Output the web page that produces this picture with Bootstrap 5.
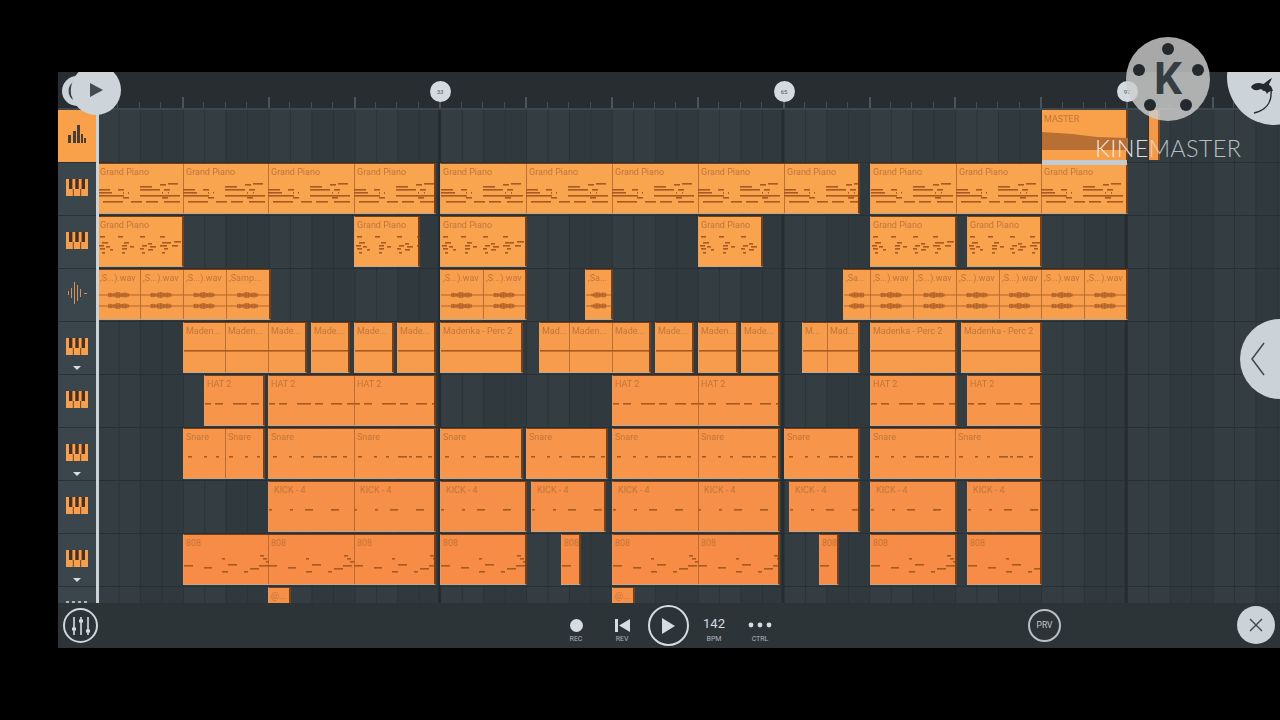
<!DOCTYPE html>
<html lang="en">
<head>
<meta charset="utf-8">
<title>FL Studio Mobile playlist</title>
<link href="https://cdn.jsdelivr.net/npm/bootstrap@5.3.0/dist/css/bootstrap.min.css" rel="stylesheet">
<style>
html,body{height:720px;width:1280px;overflow:hidden;background:#000;font-family:Roboto,"Liberation Sans",sans-serif;}
.stage{position:relative;width:1280px;height:720px;padding:72px 0 72px 58px;}
.app{width:1222px;height:576px;overflow:hidden;background:#30383d;}
.ruler{height:38px;flex:none;position:relative;z-index:5;background-color:#272d31;border-bottom:2px solid #3d474d;
 background-image:repeating-linear-gradient(90deg,#4a545a 0 2px,transparent 2px 85.85px),repeating-linear-gradient(90deg,#444e54 0 1px,transparent 1px 21.46px);
 background-size:100% 11px,100% 6px;background-position:38px 25px,38px 30px;background-repeat:no-repeat;}
.workarea{height:493px;flex:none;}
.heads{width:38px;flex:none;background:#3a454c;}
.head{height:53px;flex:none;position:relative;border-bottom:1px solid #2a3237;}
.head-on{background:#f9a04b;}
.head-cut{height:16px;border:0;}
.cutkeys{position:absolute;left:8px;bottom:0;width:22px;height:2px;background-image:repeating-linear-gradient(90deg,#aeb4b4 0 3px,transparent 3px 6px);}
.head svg{display:block;margin-top:-4px;}
.drop{position:absolute;left:15px;bottom:4px;width:0;height:0;border-left:4px solid transparent;border-right:4px solid transparent;border-top:4px solid #d7dde1;}
.canvas{width:1184px;flex:none;position:relative;overflow:hidden;background-color:#30393d;
 background-image:linear-gradient(90deg,#262d32 0 3px,transparent 3px),linear-gradient(90deg,#2a3237 0 1px,transparent 1px),linear-gradient(#283035 0 1px,transparent 1px),linear-gradient(90deg,rgba(255,255,255,.02) 0 43px,transparent 43px);
 background-size:343.4px 100%,21.46px 100%,100% 53px,85.85px 100%;background-position:342px 0,1px 0,0 52px,1px 0;filter:blur(.35px);}
.playline{position:absolute;left:0;top:0;bottom:0;width:2.5px;background:#c9d3da;z-index:4;}
.clip{position:absolute;overflow:hidden;background:var(--tone);border-top:1px solid #7d3f12;border-right:2px solid #7d3f12;border-bottom:1px solid #bda88f;border-left:1px solid rgba(195,170,145,.55);box-sizing:border-box;}
.clip svg{position:absolute;left:0;top:0;}
.seg{position:absolute;top:0;bottom:0;border-left:1px solid rgba(168,96,44,.75);}
.seg:first-child{border-left:0;}
.cliptxt{position:absolute;left:2px;top:3px;font-size:9px;line-height:11px;color:#c1753a;white-space:nowrap;}
.masterclip{position:absolute;left:946px;top:0;width:86px;height:50px;background:#f9a04b;border-right:2px solid #7d3f12;}
.masterclip .cliptxt{top:4px;}
.masterstrip{position:absolute;left:946px;top:50px;width:85px;height:5px;background:#c4cbd0;z-index:2;}
.thinclip{position:absolute;left:1053px;top:0;width:11px;height:50px;background:#f39a4a;border-right:2px solid #8a4a1a;}
.footer{height:45px;flex:none;background:#2d3438;position:relative;color:#d5dce2;}
.mix{width:35px;height:35px;border:2px solid #cfd6da;margin-left:5px;}
.transport{position:absolute;left:495px;top:0;height:45px;}
.tool{width:46px;height:45px;}
.ticon{height:16px;margin-top:14px;}
.tlabel{font-size:7px;line-height:8px;color:#aeb6bb;margin-top:2px;}
.recdot{width:13px;height:13px;background:#d5dce2;}
.bigplay{width:41px;height:41px;border:2px solid #d5dce2;margin-top:2px;}
.bpm{font-size:13px;line-height:15px;color:#d5dce2;margin-top:-3px;}
.prv{position:absolute;left:970px;top:6px;width:33px;height:33px;border:2px solid #b9c1c6;font-size:8.5px;color:#c3cace;}
.closer{position:absolute;left:1179px;top:3px;width:38px;height:38px;background:#cbd3d9;}
.bubble{position:absolute;top:9px;width:21px;height:21px;background:#d4dbe0;color:#4b555b;font-size:6px;}
.handle2{position:absolute;left:4px;top:4px;width:30px;height:30px;background:#cbd3d9;}
.handle{position:absolute;left:13px;top:-7px;width:50px;height:50px;background:#cdd5db;}
.flball{position:absolute;left:1169px;top:-43px;width:94px;height:96px;background:#ccd4da;}
.side{position:absolute;left:1240px;top:319px;width:80px;height:80px;background:#cbd3d9;z-index:7;}
.klogo{position:absolute;left:1126px;top:37px;width:84px;height:84px;background:rgba(205,205,205,.82);z-index:8;}
.hole{position:absolute;width:12px;height:12px;background:#23292c;}
.kletter{font-size:44px;line-height:44px;font-weight:700;color:#363d42;font-family:Roboto,"Liberation Sans",sans-serif;}
.kname{position:absolute;left:1095px;top:134px;z-index:8;font-family:Lato,"Liberation Sans",sans-serif;font-size:23.5px;line-height:28px;font-weight:300;letter-spacing:.3px;color:rgba(222,228,231,.78);white-space:nowrap;}
.kname b{font-weight:300;color:rgba(250,245,238,.9);}
</style>
</head>
<body>
<div class="stage">
 <div class="app d-flex flex-column">
  <div class="ruler">
   <div class="handle2 rounded-circle"><svg width="30" height="30"><path d="M13 5a11 11 0 0 0 0 20a14 14 0 0 1 0-20z" fill="#3a4348"/></svg></div>
   <div class="handle rounded-circle d-flex align-items-center justify-content-center"><svg width="16" height="16" viewBox="0 0 16 16"><path d="M2 1l13 7-13 7z" fill="#434c52"/></svg></div>
   <div class="bubble rounded-circle d-flex align-items-center justify-content-center" id="b33">33</div>
   <div class="bubble rounded-circle d-flex align-items-center justify-content-center" id="b65">65</div>
   <div class="bubble rounded-circle d-flex align-items-center justify-content-center" id="b97">97</div>
   <div class="flball rounded-circle"><svg width="94" height="96" viewBox="0 0 94 96"><path d="M24 58c2-4 8-5 12-3l2-1c1-1 3-3 7-5-1 3-3 5-3 7 3 1 3 4 4 6-3 0-5 1-6 3-1-3-3-4-4-3-2-3-3-1-5-1-3 1-6-1-7-3z" fill="#23292c"/><path d="M44 60c1 10-1 20-17 24" fill="none" stroke="#23292c" stroke-width="1.4"/></svg></div>
  </div>
  <div class="workarea d-flex">
   <div class="heads d-flex flex-column" id="heads"></div>
   <div class="canvas" id="canvas">
    <div class="playline"></div>
    <div class="masterclip"><span class="cliptxt">MASTER</span><svg width="86" height="50"><path d="M0 22l30 2 25 3 31 1v12H0z" fill="#b86f34"/></svg></div>
    <div class="masterstrip"></div>
    <div class="thinclip"></div>
   </div>
  </div>
  <div class="footer d-flex align-items-center">
   <div class="mix rounded-circle d-flex align-items-center justify-content-center">
    <svg width="24" height="24" viewBox="0 0 24 24" fill="none" stroke="#d5dce2" stroke-width="1.6"><path d="M5 3v18M12 3v18M19 3v18"/><path d="M3 15h4M10 7h4M17 17h4" stroke-width="3"/></svg>
   </div>
   <div class="transport d-flex">
    <div class="tool d-flex flex-column align-items-center"><div class="ticon d-flex align-items-center"><div class="recdot rounded-circle"></div></div><div class="tlabel">REC</div></div>
    <div class="tool d-flex flex-column align-items-center"><div class="ticon d-flex align-items-center"><svg width="15" height="15" viewBox="0 0 15 15"><path d="M0 1h3v13H0zM15 1v13L4 7.5z" fill="#d5dce2"/></svg></div><div class="tlabel">REV</div></div>
    <div class="tool d-flex justify-content-center"><div class="bigplay rounded-circle d-flex align-items-center justify-content-center"><svg width="16" height="18" viewBox="0 0 16 18"><path d="M2 1l13 8-13 8z" fill="#d5dce2"/></svg></div></div>
    <div class="tool d-flex flex-column align-items-center"><div class="ticon d-flex align-items-center"><div class="bpm">142</div></div><div class="tlabel">BPM</div></div>
    <div class="tool d-flex flex-column align-items-center"><div class="ticon d-flex align-items-center"><svg width="24" height="14" viewBox="0 0 24 14"><circle cx="3" cy="7" r="2.4" fill="#d5dce2"/><circle cx="12" cy="7" r="2.4" fill="#d5dce2"/><circle cx="21" cy="7" r="2.4" fill="#d5dce2"/></svg></div><div class="tlabel">CTRL</div></div>
   </div>
   <div class="prv rounded-circle d-flex align-items-center justify-content-center">PRV</div>
   <div class="closer rounded-circle d-flex align-items-center justify-content-center"><svg width="16" height="16" viewBox="0 0 16 16"><path d="M2 2l12 12M14 2L2 14" stroke="#3e474c" stroke-width="1.4"/></svg></div>
  </div>
 </div>
 <div class="side rounded-circle"><svg width="30" height="80"><path d="M24 24L12 40l12 16" fill="none" stroke="#3e474c" stroke-width="1.5"/></svg></div>
 <div class="klogo rounded-circle d-flex align-items-center justify-content-center">
  <span class="hole rounded-circle" id="h1"></span><span class="hole rounded-circle" id="h2"></span><span class="hole rounded-circle" id="h3"></span><span class="hole rounded-circle" id="h4"></span><span class="hole rounded-circle" id="h5"></span>
  <span class="kletter">K</span>
 </div>
 <div class="kname"><b>KINE</b>MASTER</div>
</div>
<script src="https://cdn.jsdelivr.net/npm/bootstrap@5.3.0/dist/js/bootstrap.bundle.min.js"></script>
<script>
// left-hand track headers
var piano='<svg class="mx-auto" width="22" height="17" viewBox="0 0 22 17"><rect width="22" height="17" fill="#f5a050"/><path d="M3 0h3.4v10H3zM9.3 0h3.4v10H9.300zM15.600 0H19v10h-3.400z" fill="#4a3020"/><path d="M7.300 10v7M14.700 10v7" stroke="#6b4320" stroke-width="1"/></svg>';
var bars='<svg class="mx-auto" width="18" height="18" viewBox="0 0 18 18"><path d="M0 10h3v8H0zM5 6h3v12H5zM9 0h3v18H9zM13 9h2v9h-2zM16 13h2v5h-2z" fill="#4b3d2f"/></svg>';
var wave='<svg class="mx-auto" width="20" height="24" viewBox="0 0 20 24" stroke="#d08f5c" stroke-width="1" shape-rendering="crispEdges"><path d="M1.500 10v4M4.500 7v10M7.500 1v22M10.500 4v16M13.500 8v8M16.500 12h3"/></svg>';
var heads=document.getElementById('heads');
[[bars,0,1],[piano,0],[piano,0],[wave,0],[piano,1],[piano,0],[piano,1],[piano,0],[piano,1]].forEach(function(h){
 var d=document.createElement('div');
 d.className='head d-flex align-items-center'+(h[2]?' head-on':'');
 d.innerHTML=h[0]+(h[1]?'<span class="drop"></span>':'');
 heads.appendChild(d);
});
var cut=document.createElement('div');cut.className='head head-cut';cut.innerHTML='<span class="cutkeys"></span>';heads.appendChild(cut);

// note patterns: [x,y,width] in px within one segment
var PAT={
 gp:[[62,20,6],[70,19,10],[42,22,12],[0,25,12],[20,25,6],[42,25,20],[66,25,6],[0,28,14],[0,31,26],[42,31,40],[25,28,1],[30,28,1],[64,28,1],[70,28,1],[25,33,6],[64,33,6],[5,37,20],[33,37,11],[48,37,12],[66,37,16]],
 gs:[[2,19,5],[20,19,5],[42,19,5],[62,19,5],[4,25,6],[26,25,5],[50,26,4],[64,25,9],[76,24,7],[1,28,5],[8,29,4],[24,28,5],[32,29,4],[44,28,5],[52,29,6],[62,28,7],[74,28,6],[2,31,5],[12,32,3],[24,31,5],[42,31,4],[50,32,5],[66,31,4],[4,35,3],[24,35,3],[44,35,3],[64,35,3]],
 hat:[[0,27,6],[10,27,8],[28,27,14],[46,27,8],[62,27,11],[78,27,7]],
 sn:[[4,27,4],[20,27,3],[32,27,3],[44,27,9],[55,27,3],[62,27,6],[74,27,4]],
 kick:[[0,27,3],[21,27,3],[36,27,8],[62,27,3],[64,27,6]],
 b8:[[0,30,9],[20,32,8],[38,36,6],[44,29,9],[60,36,4],[66,33,9],[75,30,9],[76,20,4],[79,23,4],[82,26,4],[38,23,3]],
 mad:[[0,27,120]],
 wav:[]
};
var ROWS=[
 {k:'gp',t:'#f9a44f',c:[[97,435,[183,268,354],'Grand Piano'],[440,859,[526,612,698,784],'Grand Piano'],[870,1127,[956,1041],'Grand Piano']]},
 {k:'gs',t:'#f9a34f',c:[[97,183,[],'Grand Piano'],[354,419,[],'Grand Piano'],[440,526,[],'Grand Piano'],[698,762,[],'Grand Piano'],[870,956,[],'Grand Piano'],[967,1041,[],'Grand Piano']]},
 {k:'wav',t:'#f89f4e',c:[[97,270,[140,183,226],[',S...).wav',',S...).wav',',S...).wav',',Samp...']],[440,526,[483],',S...).wav'],[585,612,[],',Sa...'],[843,1127,[870,913,956,999,1041,1084],[',Sa...',',S...).wav',',S...).wav',',S...).wav',',S...).wav',',S...).wav',',S...).wav']]]},
 {k:'mad',t:'#f79b4d',c:[[183,306,[225,268],['Maden...','Maden...','Made...']],[311,349,[],'Made...'],[354,393,[],'Made...'],[397,435,[],'Made...'],[440,522,[],'Madenka - Perc 2'],[539,650,[569,612],['Mad...','Maden...','Made...']],[655,693,[],'Made...'],[698,737,[],'Maden...'],[741,779,[],'Made...'],[802,859,[827],['M...','Mad...']],[870,956,[],'Madenka - Perc 2'],[961,1041,[],'Madenka - Perc 2']]},
 {k:'hat',t:'#f7964b',c:[[204,264,[],'HAT 2'],[268,435,[354],'HAT 2'],[612,779,[698],'HAT 2'],[870,956,[],'HAT 2'],[967,1041,[],'HAT 2']]},
 {k:'sn',t:'#f7954a',c:[[183,264,[225],'Snare'],[268,435,[354],'Snare'],[440,522,[],'Snare'],[526,607,[],'Snare'],[612,779,[698],'Snare'],[784,859,[],'Snare'],[870,1041,[955],'Snare']]},
 {k:'kick',t:'#f68f47',c:[[268,435,[354],'KICK - 4',1],[440,526,[],'KICK - 4',1],[531,605,[],'KICK - 4',1],[612,779,[698],'KICK - 4',1],[789,859,[],'KICK - 4',1],[870,956,[],'KICK - 4',1],[967,1041,[],'KICK - 4',1]]},
 {k:'b8',t:'#f68c46',c:[[183,435,[268,354],'808'],[440,526,[],'808'],[561,580,[],'808'],[612,779,[698],'808'],[819,838,[],'808'],[870,956,[],'808'],[967,1041,[],'808']]},
 {k:'at',t:'#f68f47',h:17,c:[[268,290,[],'@...'],[612,634,[],'@...']]}
];
var canvas=document.getElementById('canvas');
var NOTE='#a85a20';
function rect(x,y,w,h,f){return '<rect x="'+x+'" y="'+y+'" width="'+w+'" height="'+h+'" fill="'+f+'"/>';}
function waveform(a,b){
 var s='';
 [25,36].forEach(function(y){
  s+=rect(a,y-.5,b-a,1,'#b5652a');
  var w=b-a,c=a+w*.48,r=Math.min(w*.28,10);
  for(var i=-r;i<r;i+=1.5){var hh=1+1.1*Math.abs(Math.sin(i*1.7))+(1-Math.abs(i)/r);s+=rect(c+i,y-hh,1.4,hh*2,'#b5652a');}
 });
 return s;
}
ROWS.forEach(function(row,ri){
 row.c.forEach(function(c){
  var x1=c[0],x2=c[1],cuts=[x1].concat(c[2]),el=document.createElement('div');
  el.className='clip';
  el.style.left=(x1-96)+'px';
  el.style.top=((ri+1)*53)+'px';
  el.style.width=(x2-x1+1)+'px';
  el.style.height=(row.h||51)+'px';
  el.style.setProperty('--tone',row.t);
  var html='',notes='',pat=PAT[row.k]||[];
  cuts.forEach(function(p,i){
   var next=i+1<cuts.length?cuts[i+1]:x2,lab=Array.isArray(c[3])?c[3][i]:c[3];
   var sx=i?p-x1-1:0;
   html+='<div class="seg" style="left:'+sx+'px;width:'+(next-p)+'px"><span class="cliptxt"'+(c[4]?' style="left:5px"':'')+'>'+lab+'</span></div>';
   if(row.k==='wav'){notes+=waveform(sx,next-x1-1);}
   else pat.forEach(function(n){if(n[0]<next-p)notes+=rect(sx+n[0],n[1],Math.min(n[2],next-p-n[0]),1.6,NOTE);});
  });
  el.innerHTML=html+'<svg width="'+(x2-x1)+'" height="52">'+notes+'</svg>';
  canvas.appendChild(el);
 });
});
[['b33',440],['b65',784],['b97',1127]].forEach(function(b){document.getElementById(b[0]).style.left=(b[1]-58-10.5)+'px';});
[[1168,49],[1139,70],[1198,70],[1150,105],[1186,105]].forEach(function(h,i){var e=document.getElementById('h'+(i+1));e.style.left=(h[0]-1126-6)+'px';e.style.top=(h[1]-37-6)+'px';});
</script>
</body>
</html>
